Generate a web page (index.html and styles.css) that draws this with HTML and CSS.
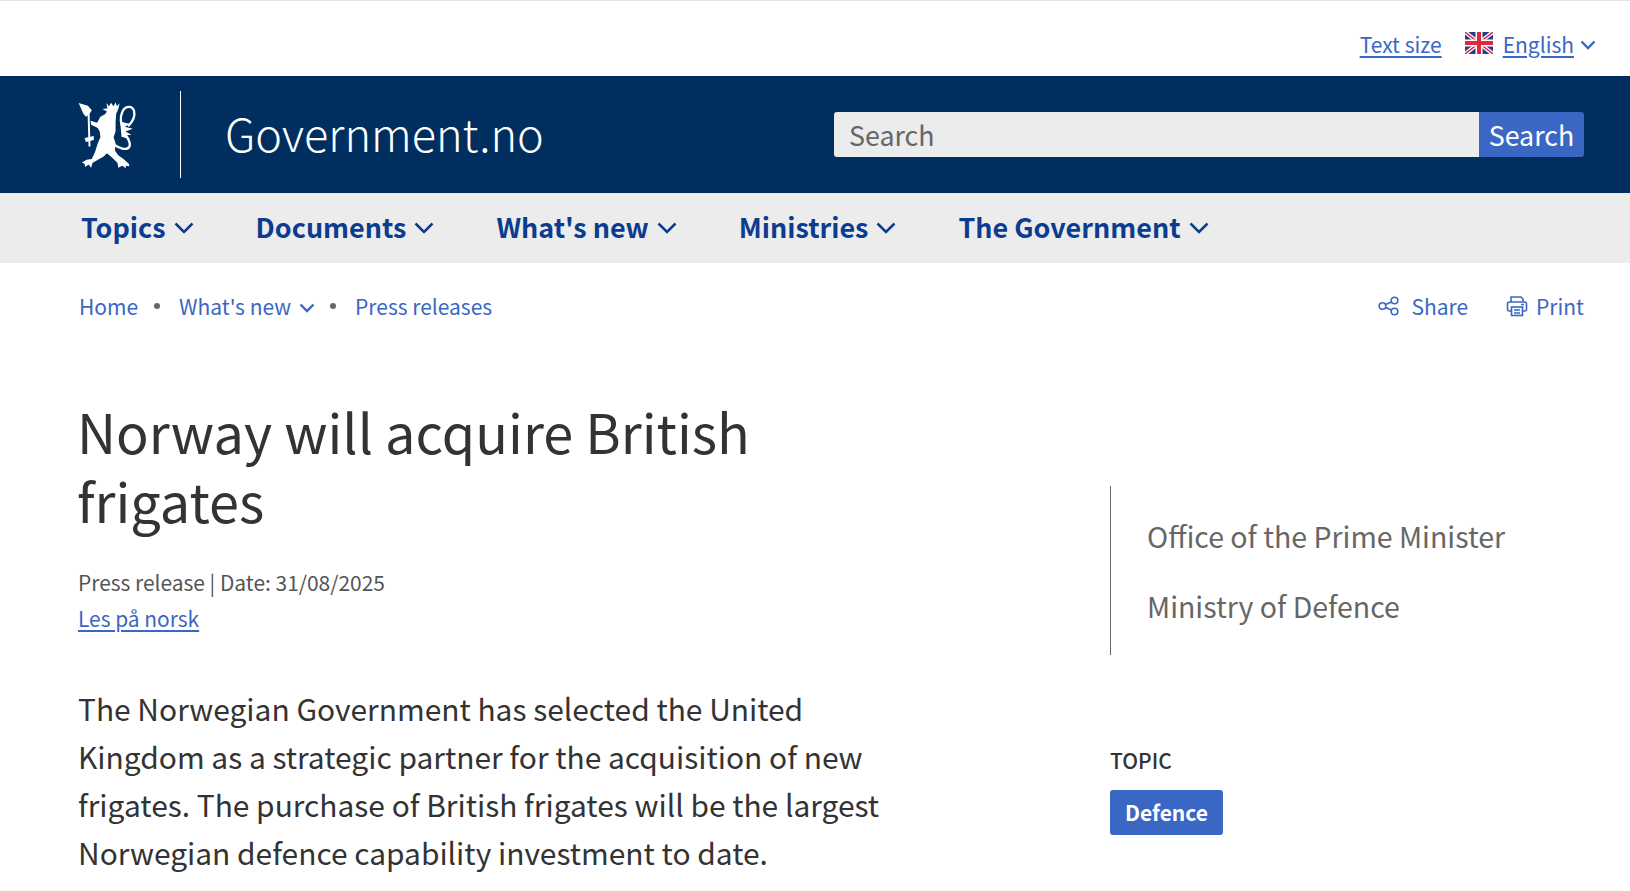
FILE: index.html
```html
<!DOCTYPE html>
<html lang="en">
<head>
<meta charset="utf-8">
<title>Norway will acquire British frigates</title>
<link rel="stylesheet" href="styles.css">
</head>
<body>
<div class="topbar">
  <a class="toplink" href="#">Text size</a>
  <div class="lang">
    <svg class="flag" viewBox="0 0 28 22" width="28" height="22"><rect width="28" height="22" fill="#2b3a8c"/><path d="M0 0L28 22M28 0L0 22" stroke="#fff" stroke-width="4"/><path d="M0 0L28 22M28 0L0 22" stroke="#e0283c" stroke-width="1.4"/><path d="M14 0V22M0 11H28" stroke="#fff" stroke-width="7"/><path d="M14 0V22M0 11H28" stroke="#e0283c" stroke-width="4"/></svg>
    <a class="toplink" href="#">English</a>
    <svg class="chev" viewBox="0 0 16 10" width="16" height="10"><path d="M1.500 1.500L8 8L14.500 1.500" fill="none" stroke="#3a67c4" stroke-width="2.400"/></svg>
  </div>
</div>
<header class="masthead">
  <svg class="lion" viewBox="0 0 200 228" width="66" height="76"><g fill="#fff"><path d="M98 14L106 24L112 13L120 24L126 12L130 24L138 15L134 34L102 34Z"/><path d="M104 30L134 34L128 46L126 70L126 100L120 118L126 136L124 158L134 172L150 184L166 198L168 206L156 204L158 212L146 204L134 210L132 196L116 180L100 166L90 176L66 190L56 196L52 210L44 200L34 208L32 198L24 194L38 186L54 184L64 162L72 136L80 118L78 100L72 90L52 80L50 68L70 74L80 56L94 48L100 40L86 32Z"/><path d="M14 14L42 22L54 36L46 48L36 56L28 46Z"/><path d="M140 70L170 78L154 86L178 92L156 100L174 110L158 112L170 124L144 116Z"/><path d="M32 120L60 114L60 126L36 132Z"/></g><path fill="none" stroke="#fff" stroke-width="7" d="M120 140C135 150 160 160 168 146C174 130 160 122 152 100C142 80 138 60 146 42C154 22 176 20 182 38C186 54 176 72 164 84"/><path fill="none" stroke="#fff" stroke-width="6" d="M44 40L47 146"/></svg>
  <div class="divider"></div>
  <a class="sitename" href="#">Government.no</a>
  <form class="search">
    <input class="search-input" type="text" placeholder="Search">
    <button class="search-btn" type="button">Search</button>
  </form>
</header>
<nav class="mainnav">
  <a class="navitem" href="#">Topics<svg class="navchev" viewBox="0 0 20 12" width="20" height="12"><path d="M1.500 1.500L10 10L18.500 1.500" fill="none" stroke="#0b3c8f" stroke-width="2.500"/></svg></a>
  <a class="navitem" href="#">Documents<svg class="navchev" viewBox="0 0 20 12" width="20" height="12"><path d="M1.500 1.500L10 10L18.500 1.500" fill="none" stroke="#0b3c8f" stroke-width="2.500"/></svg></a>
  <a class="navitem" href="#">What's new<svg class="navchev" viewBox="0 0 20 12" width="20" height="12"><path d="M1.500 1.500L10 10L18.500 1.500" fill="none" stroke="#0b3c8f" stroke-width="2.500"/></svg></a>
  <a class="navitem" href="#">Ministries<svg class="navchev" viewBox="0 0 20 12" width="20" height="12"><path d="M1.500 1.500L10 10L18.500 1.500" fill="none" stroke="#0b3c8f" stroke-width="2.500"/></svg></a>
  <a class="navitem" href="#">The Government<svg class="navchev" viewBox="0 0 20 12" width="20" height="12"><path d="M1.500 1.500L10 10L18.500 1.500" fill="none" stroke="#0b3c8f" stroke-width="2.500"/></svg></a>
</nav>
<div class="crumbrow">
  <div class="crumbs">
    <a href="#">Home</a><span class="dot"></span>
    <a href="#">What's new</a><svg class="crumbchev" viewBox="0 0 16 10" width="16" height="10"><path d="M1.500 1.500L8 8L14.500 1.500" fill="none" stroke="#3a67c4" stroke-width="2.400"/></svg><span class="dot"></span>
    <a href="#">Press releases</a>
  </div>
  <div class="tools">
    <a class="tool tool-share" href="#"><svg viewBox="0 0 22 20" width="22" height="20"><g fill="none" stroke="#3a67c4" stroke-width="1.600"><circle cx="4.500" cy="10" r="3.300"/><circle cx="16.500" cy="4.500" r="3.300"/><circle cx="16.500" cy="15.500" r="3.300"/><path d="M7.500 8.600L13.500 5.900M7.500 11.400L13.500 14.100"/></g></svg><span>Share</span></a>
    <a class="tool" href="#"><svg viewBox="0 0 22 22" width="22" height="22"><g fill="none" stroke="#3a67c4" stroke-width="1.600"><path d="M5 7V2H15L17 4V7"/><rect x="1.500" y="7" width="19" height="9" rx="2"/><rect x="5.500" y="12" width="11" height="8.500" fill="#fff"/><path d="M8 15H14M8 18H14M15 9.500H18"/></g></svg><span>Print</span></a>
  </div>
</div>
<main class="content">
  <article class="article">
    <h1 class="title">Norway will acquire British frigates</h1>
    <div class="meta">Press release | Date: 31/08/2025</div>
    <a class="altlang" href="#">Les på norsk</a>
    <p class="lead">The Norwegian Government has selected the United Kingdom as a strategic partner for the acquisition of new frigates. The purchase of British frigates will be the largest Norwegian defence capability investment to date.</p>
  </article>
  <aside class="side">
    <div class="owners">
      <div class="owner">Office of the Prime Minister</div>
      <div class="owner">Ministry of Defence</div>
    </div>
    <div class="topic-label">TOPIC</div>
    <a class="topic" href="#">Defence</a>
  </aside>
</main>
</body>
</html>
```
FILE: styles.css
```css
* { box-sizing: border-box; }
html, body { margin: 0; padding: 0; }
body {
  font-family: "Noto Sans CJK SC", "Open Sans", sans-serif;
  color: #333;
  background: #fff;
  height: 891px;
  overflow: hidden;
  border-top: 1px solid #e4e4e4;
}
a { color: #3a67c4; text-decoration: none; }
.topbar {
  height: 75px;
  display: flex;
  justify-content: flex-end;
  align-items: center;
  gap: 23px;
  padding: 10px 34px 0 0;
}
.toplink { font-size: 21px; text-decoration: underline; text-underline-offset: 3px; }
.lang { display: flex; align-items: center; gap: 6px; }
.flag { margin-right: 4px; margin-top: -2px; }
.chev { margin-top: 2px; }
.masthead {
  height: 117px;
  background: #002f5f;
  display: flex;
  align-items: center;
  padding: 0 46px 0 74px;
}
.lion { flex: none; margin-top: 3px; }
.divider { width: 1px; height: 87px; background: #fff; margin-left: 40px; }
.sitename { color: #fff; font-size: 45px; font-weight: 300; margin: -4px 0 0 44px; }
.search { margin-left: auto; display: flex; width: 750px; height: 45px; margin-top: -1px; }
.search-input {
  flex: 1; min-width: 0;
  border: 0; outline: 0;
  border-radius: 3px 0 0 3px;
  background: #ececec;
  font: 26.800px "Noto Sans CJK SC", sans-serif;
  color: #333;
  padding: 0 15px;
}
.search-input::placeholder { color: #666; opacity: 1; }
.search-btn {
  width: 105px;
  border: 0;
  border-radius: 0 3px 3px 0;
  background: #3a67c4;
  color: #fff;
  font: 26.800px "Noto Sans CJK SC", sans-serif;
  padding: 0;
}
.mainnav {
  height: 70px;
  background: #ececec;
  display: flex;
  align-items: center;
  gap: 62px;
  padding: 0 0 4px 81px;
}
.navitem { color: #0b3c8f; font-size: 26.960px; font-weight: 700; display: flex; align-items: center; gap: 8px; }
.navchev { margin-top: 4px; }
.crumbrow {
  display: flex;
  justify-content: space-between;
  align-items: center;
  padding: 28px 46px 0 79px;
  font-size: 21px;
}
.crumbs { display: flex; align-items: center; }
.dot { width: 6px; height: 6px; border-radius: 50%; background: #666; margin: 0 19px 0 16px; }
.crumbchev { margin-left: 8px; margin-top: 3px; }
.crumbchev + .dot { margin-left: 15px; }
.tools { display: flex; gap: 38px; }
.tool { display: flex; align-items: center; gap: 8px; }
.tool-share { gap: 11px; }
.content {
  display: grid;
  grid-template-columns: 1032px 1fr;
  padding: 0 46px 0 78px;
}
.title { margin: 75px 0 0 -1px; font-size: 54px; line-height: 69px; font-weight: 400; max-width: 760px; color: #333; }
.meta { margin-top: 30px; font-size: 20.950px; line-height: 36px; color: #555; }
.altlang { font-size: 20.950px; line-height: 36px; text-decoration: underline; text-underline-offset: 3px; }
.lead { margin: 48px 0 0; font-size: 29.930px; line-height: 48px; width: 815px; color: #333; }
.side { padding-top: 165px; }
.owners { border-left: 1px solid #666; padding: 27px 0 0 36px; height: 169px; }
.owner { font-size: 28.500px; line-height: 46px; color: #666; margin-bottom: 24px; }
.topic-label { margin-top: 89px; font-size: 21px; font-weight: 500; line-height: 32px; color: #333; }
.topic {
  display: inline-block;
  margin-top: 14px;
  background: #3a67c4;
  color: #fff;
  font-size: 21px;
  font-weight: 700;
  line-height: 45px;
  padding: 0 15px;
  border-radius: 3px;
}
```
